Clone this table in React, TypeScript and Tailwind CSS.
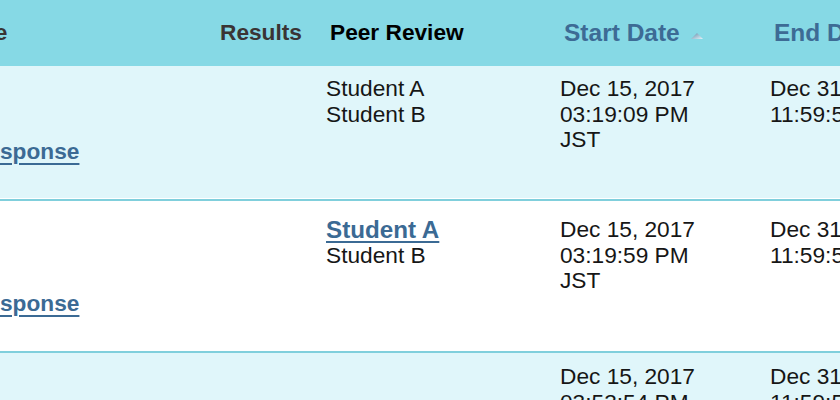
import React from 'react';

type Row = {
	pad: string;
	height: string;
	linkTop: string;
	bg: string;
	reviewers: { name: string; link?: boolean }[];
	start: string[];
	end: string[];
};

const rows: Row[] = [
	{
		pad: 'pt-[10px]',
		height: 'h-[135px]',
		linkTop: 'mt-[63px]',
		bg: 'bg-[#e0f6fa]',
		reviewers: [{ name: 'Student A' }, { name: 'Student B' }],
		start: ['Dec 15, 2017', '03:19:09 PM', 'JST'],
		end: ['Dec 31, 2017', '11:59:59 PM'],
	},
	{
		pad: 'pt-[16px]',
		height: 'h-[152px]',
		linkTop: 'mt-[74px]',
		bg: 'bg-white',
		reviewers: [{ name: 'Student A', link: true }, { name: 'Student B' }],
		start: ['Dec 15, 2017', '03:19:59 PM', 'JST'],
		end: ['Dec 31, 2017', '11:59:59 PM'],
	},
	{
		pad: 'pt-[11px]',
		height: 'h-[135px]',
		linkTop: 'mt-[63px]',
		bg: 'bg-[#e0f6fa]',
		reviewers: [],
		start: ['Dec 15, 2017', '03:53:54 PM', 'JST'],
		end: ['Dec 31, 2017', '11:59:59 PM'],
	},
];

const SortArrow = () => (
	<svg viewBox="0 0 12 6" className="w-3 h-[6px] ml-[11px] mt-[6px]">
		<defs>
			<linearGradient id="sortArrow" x1="0" y1="0" x2="1" y2="1">
				<stop offset="0%" stopColor="#5f8aa8" />
				<stop offset="100%" stopColor="#e6f4fa" />
			</linearGradient>
		</defs>
		<polygon points="6,0 12,6 0,6" fill="url(#sortArrow)" />
	</svg>
);

export default function App() {
	return (
		<div
			className="w-[840px] h-[400px] overflow-hidden bg-white text-[22.7px] leading-[25.5px] text-[#161616]"
			style={{ fontFamily: '"Liberation Sans", Arial, sans-serif' }}
		>
			<div className="flex h-[66px] items-center bg-[#86d9e5] font-bold whitespace-nowrap">
				<div className="w-[216px] shrink-0">
					<span className="block -ml-[101px] text-[#3a3434]">Response</span>
				</div>
				<div className="w-[110px] shrink-0 pl-1 text-[#3a3434]">Results</div>
				<div className="w-[234px] shrink-0 pl-1 text-black">Peer Review</div>
				<div className="w-[210px] shrink-0 pl-1 flex items-center text-[24.5px] text-[#3d6b95]">
					Start Date
					<SortArrow />
				</div>
				<div className="shrink-0 pl-1 text-[24.5px] text-[#3d6b95]">End Date</div>
			</div>

			{rows.map((row, key) => (
				<div
					key={key}
					className={`${row.bg} ${row.height} ${row.pad} flex whitespace-nowrap border-b-2 border-[#80cfdc] shadow-[inset_0_-1px_0_#ffffff]`}
				>
					<div className="w-[216px] shrink-0">
						<a
							href="#"
							className={`${row.linkTop} block -ml-[29px] font-bold text-[#3b6a94] underline decoration-2 underline-offset-[4px]`}
						>
							Response
						</a>
					</div>
					<div className="w-[110px] shrink-0" />
					<div className="w-[234px] shrink-0 flex flex-col items-start">
						{row.reviewers.map((r, i) =>
							r.link ? (
								<a
									key={i}
									href="#"
									className="text-[24.2px] font-bold text-[#3b6a94] underline decoration-2 underline-offset-[3px]"
								>
									{r.name}
								</a>
							) : (
								<span key={i}>{r.name}</span>
							)
						)}
					</div>
					<div className="w-[210px] shrink-0 flex flex-col">
						{row.start.map((line, i) => (
							<span key={i}>{line}</span>
						))}
					</div>
					<div className="shrink-0 flex flex-col">
						{row.end.map((line, i) => (
							<span key={i}>{line}</span>
						))}
					</div>
				</div>
			))}
		</div>
	);
}
